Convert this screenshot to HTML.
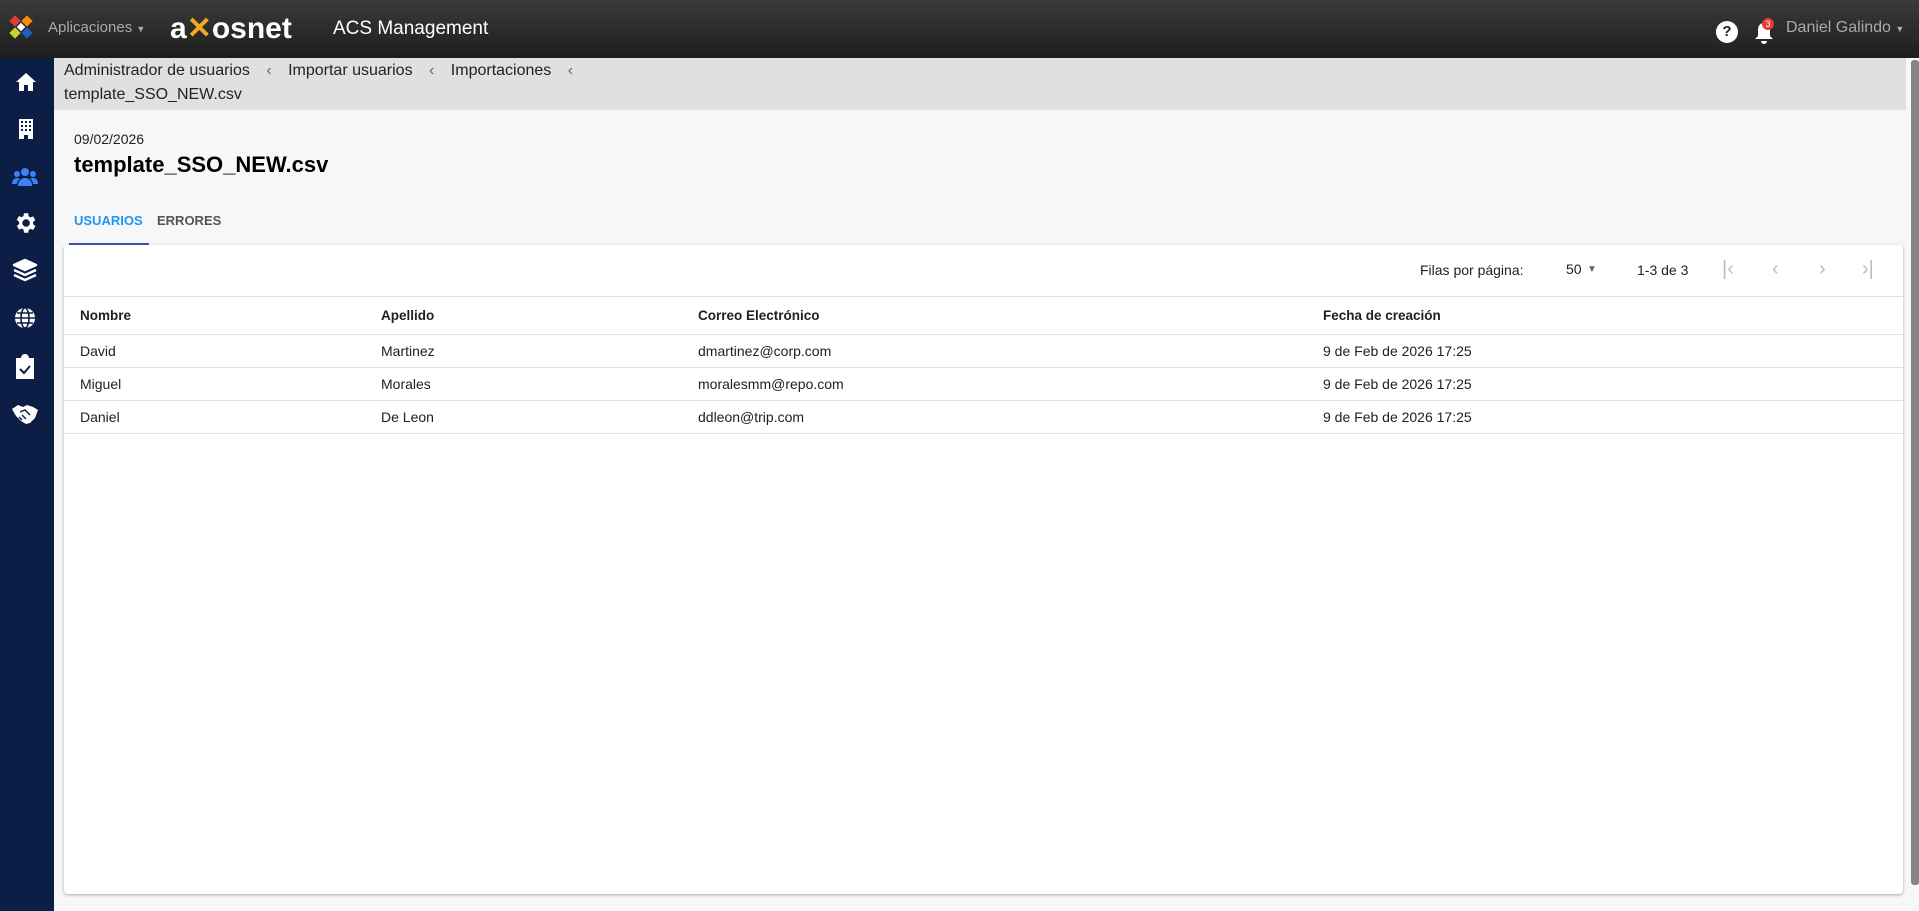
<!DOCTYPE html>
<html><head><meta charset="utf-8"><style>
*{box-sizing:border-box;margin:0;padding:0}
body{width:1919px;height:911px;overflow:hidden;background:#f7f7f7;font-family:"Liberation Sans",Roboto,sans-serif;position:relative;color:#212121}
.top{position:absolute;left:0;top:0;width:1919px;height:58px;background:linear-gradient(#3a3a3a,#1e1e1e)}
.side{position:absolute;left:0;top:58px;width:54px;height:853px;background:#0c1e45}
.crumb{position:absolute;left:54px;top:58px;width:1852px;height:52px;background:#e0e0e0;font-size:16px;color:#222}
.abs{position:absolute}
.card{position:absolute;left:64px;top:245px;width:1839px;height:649px;background:#fff;border-radius:4px;box-shadow:0 1px 3px rgba(0,0,0,.3)}
.row{position:absolute;left:0;width:1839px;border-bottom:1px solid #e0e0e0;font-size:14px}
.row span{position:absolute}
.sb{position:absolute;left:1911px;top:60px;width:8px;height:825px;background:#858585;border-radius:3px}
svg{position:absolute}
</style></head><body>
<div class="top">
 <svg style="left:8px;top:14px" width="26" height="26" viewBox="0 0 26 26">
  <rect x="3" y="3" width="8" height="8" fill="#e53935" transform="rotate(45 7 7)"/>
  <rect x="15" y="3" width="8" height="8" fill="#fb8c00" transform="rotate(45 19 7)"/>
  <rect x="3" y="15" width="8" height="8" fill="#c6d52f" transform="rotate(45 7 19)"/>
  <rect x="15" y="15" width="8" height="8" fill="#1e5fbf" transform="rotate(45 19 19)"/>
  <rect x="10" y="10" width="6" height="6" fill="#fff" transform="rotate(45 13 13)"/>
 </svg>
 <div class="abs" style="left:48px;top:19px;font-size:15px;color:#aaa">Aplicaciones <span style="font-size:9px">▼</span></div>
 <div class="abs" style="left:170px;top:11px;font-size:30px;color:#fff;font-weight:bold">a<span style="color:#f5a623">✕</span>osnet</div>
 <div class="abs" style="left:333px;top:18px;font-size:19px;color:#fff">ACS Management</div>
 <div class="abs" style="left:1716px;top:21px;width:22px;height:22px;border-radius:50%;background:#fff;color:#222;font-weight:bold;font-size:15px;text-align:center;line-height:22px">?</div>
 <svg style="left:1754px;top:21px" width="20" height="24" viewBox="0 0 20 24"><path d="M10 2C6 2 4 5 4 9v6l-3 3h18l-3-3V9c0-4-2-7-6-7zM7 20h6a3 3 0 0 1-6 0z" fill="#fff"/></svg>
 <div class="abs" style="left:1762px;top:18px;width:12px;height:12px;border-radius:50%;background:#e53935;color:#fff;font-size:9px;text-align:center;line-height:12px">3</div>
 <div class="abs" style="left:1786px;top:19px;font-size:16px;color:#aaa">Daniel Galindo <span style="font-size:9px">▼</span></div>
</div>
<div class="side">
 <svg style="left:14px;top:12px" width="24" height="24" viewBox="0 0 24 24"><path d="M12 3L2 12h3v9h5v-6h4v6h5v-9h3z" fill="#fff"/></svg>
 <svg style="left:14px;top:59px" width="24" height="24" viewBox="0 0 24 24"><path d="M5 2h14v20h-5v-4h-4v4H5z" fill="#fff"/><g fill="#0c1e45"><rect x="7" y="4" width="2" height="2"/><rect x="11" y="4" width="2" height="2"/><rect x="15" y="4" width="2" height="2"/><rect x="7" y="8" width="2" height="2"/><rect x="11" y="8" width="2" height="2"/><rect x="15" y="8" width="2" height="2"/><rect x="7" y="12" width="2" height="2"/><rect x="11" y="12" width="2" height="2"/><rect x="15" y="12" width="2" height="2"/></g></svg>
 <svg style="left:11px;top:108px" width="28" height="22" viewBox="0 0 28 22"><g fill="#3b82f6"><circle cx="14" cy="6" r="4"/><circle cx="6" cy="8" r="3"/><circle cx="22" cy="8" r="3"/><path d="M7 20c0-5 3-8 7-8s7 3 7 8z"/><path d="M1 18c0-4 2-6 5-6 1 0 2 0 3 1-2 1-3 3-3 5z"/><path d="M27 18c0-4-2-6-5-6-1 0-2 0-3 1 2 1 3 3 3 5z"/></g></svg>
 <svg style="left:12px;top:152px" width="26" height="26" viewBox="0 0 24 24"><path fill="#fff" d="M19.4 13a7.5 7.5 0 0 0 0-2l2.1-1.6-2-3.5-2.5 1a7 7 0 0 0-1.7-1L15 3h-4l-.4 2.6a7 7 0 0 0-1.700 1l-2.5-1-2 3.5L6.6 11a7.5 7.5 0 0 0 0 2l-2.1 1.6 2 3.5 2.5-1a7 7 0 0 0 1.7 1L11 21h4l.4-2.6a7 7 0 0 0 1.7-1l2.5 1 2-3.5zM13 15.5a3.5 3.5 0 1 1 0-7 3.5 3.5 0 0 1 0 7z"/></svg>
 <svg style="left:12px;top:200px" width="26" height="24" viewBox="0 0 26 24"><g fill="none" stroke="#fff" stroke-width="2.4" stroke-linejoin="round"><path d="M13 2L2 7l11 5 11-5z" fill="#fff"/><path d="M2 12l11 5 11-5"/><path d="M2 17l11 5 11-5"/></g></svg>
 <svg style="left:13px;top:248px" width="24" height="24" viewBox="0 0 24 24"><circle cx="12" cy="12" r="10" fill="#fff"/><g stroke="#0c1e45" stroke-width="1.6" fill="none"><ellipse cx="12" cy="12" rx="4" ry="10"/><path d="M2 12h20M4 7h16M4 17h16"/></g></svg>
 <svg style="left:15px;top:296px" width="20" height="26" viewBox="0 0 20 26"><path d="M1 4h5a4 4 0 0 1 8 0h5v21H1z" fill="#fff"/><path d="M5 15l4 4 6-7" stroke="#0c1e45" stroke-width="2" fill="none"/></svg>
 <svg style="left:11px;top:345px" width="28" height="22" viewBox="0 0 28 22"><path fill="#fff" d="M1 6l6-4 5 2 4-2 6 2 5 3-3 8-5 5-4 1-5-3-5-5z"/><path d="M9 9l5-2 5 5M8 14l3 3M11 12l4 4" stroke="#0c1e45" stroke-width="1.4" fill="none"/></svg>
</div>
<div class="crumb">
 <div class="abs" style="left:10px;top:4px">Administrador de usuarios <span style="margin:0 12px;color:#666">‹</span> Importar usuarios <span style="margin:0 12px;color:#666">‹</span> Importaciones <span style="margin:0 12px;color:#666">‹</span></div>
 <div class="abs" style="left:10px;top:28px">template_SSO_NEW.csv</div>
</div>
<div class="sb"></div>
<div class="abs" style="left:74px;top:131px;font-size:14px">09/02/2026</div>
<div class="abs" style="left:74px;top:152px;font-size:22px;font-weight:bold;color:#000">template_SSO_NEW.csv</div>
<div class="abs" style="left:74px;top:213px;font-size:13px;font-weight:bold;color:#2196f3">USUARIOS</div>
<div class="abs" style="left:157px;top:213px;font-size:13px;font-weight:bold;color:#555">ERRORES</div>
<div class="abs" style="left:69px;top:243px;width:80px;height:2px;background:#3f51b5"></div>
<div class="card">
 <div class="row" style="top:0;height:52px;font-size:14px">
  <span style="left:1356px;top:17px">Filas por página:</span>
  <span style="left:1502px;top:16px">50</span>
  <span style="left:1523px;top:19px;font-size:10px;color:#666">▼</span>
  <span style="left:1573px;top:17px">1-3 de 3</span>
  <span style="left:1658px;top:13px;font-size:20px;color:#bbb">|‹</span>
  <span style="left:1708px;top:13px;font-size:20px;color:#bbb">‹</span>
  <span style="left:1755px;top:13px;font-size:20px;color:#bbb">›</span>
  <span style="left:1798px;top:13px;font-size:20px;color:#bbb">›|</span>
 </div>
 <div class="row" style="top:52px;height:38px;font-weight:bold;font-size:13.5px">
  <span style="left:16px;top:11px">Nombre</span><span style="left:317px;top:11px">Apellido</span><span style="left:634px;top:11px">Correo Electrónico</span><span style="left:1259px;top:11px">Fecha de creación</span>
 </div>
 <div class="row" style="top:90px;height:33px"><span style="left:16px;top:8px">David</span><span style="left:317px;top:8px">Martinez</span><span style="left:634px;top:8px">dmartinez@corp.com</span><span style="left:1259px;top:8px">9 de Feb de 2026 17:25</span></div>
 <div class="row" style="top:123px;height:33px"><span style="left:16px;top:8px">Miguel</span><span style="left:317px;top:8px">Morales</span><span style="left:634px;top:8px">moralesmm@repo.com</span><span style="left:1259px;top:8px">9 de Feb de 2026 17:25</span></div>
 <div class="row" style="top:156px;height:33px"><span style="left:16px;top:8px">Daniel</span><span style="left:317px;top:8px">De Leon</span><span style="left:634px;top:8px">ddleon@trip.com</span><span style="left:1259px;top:8px">9 de Feb de 2026 17:25</span></div>
</div>
</body></html>
